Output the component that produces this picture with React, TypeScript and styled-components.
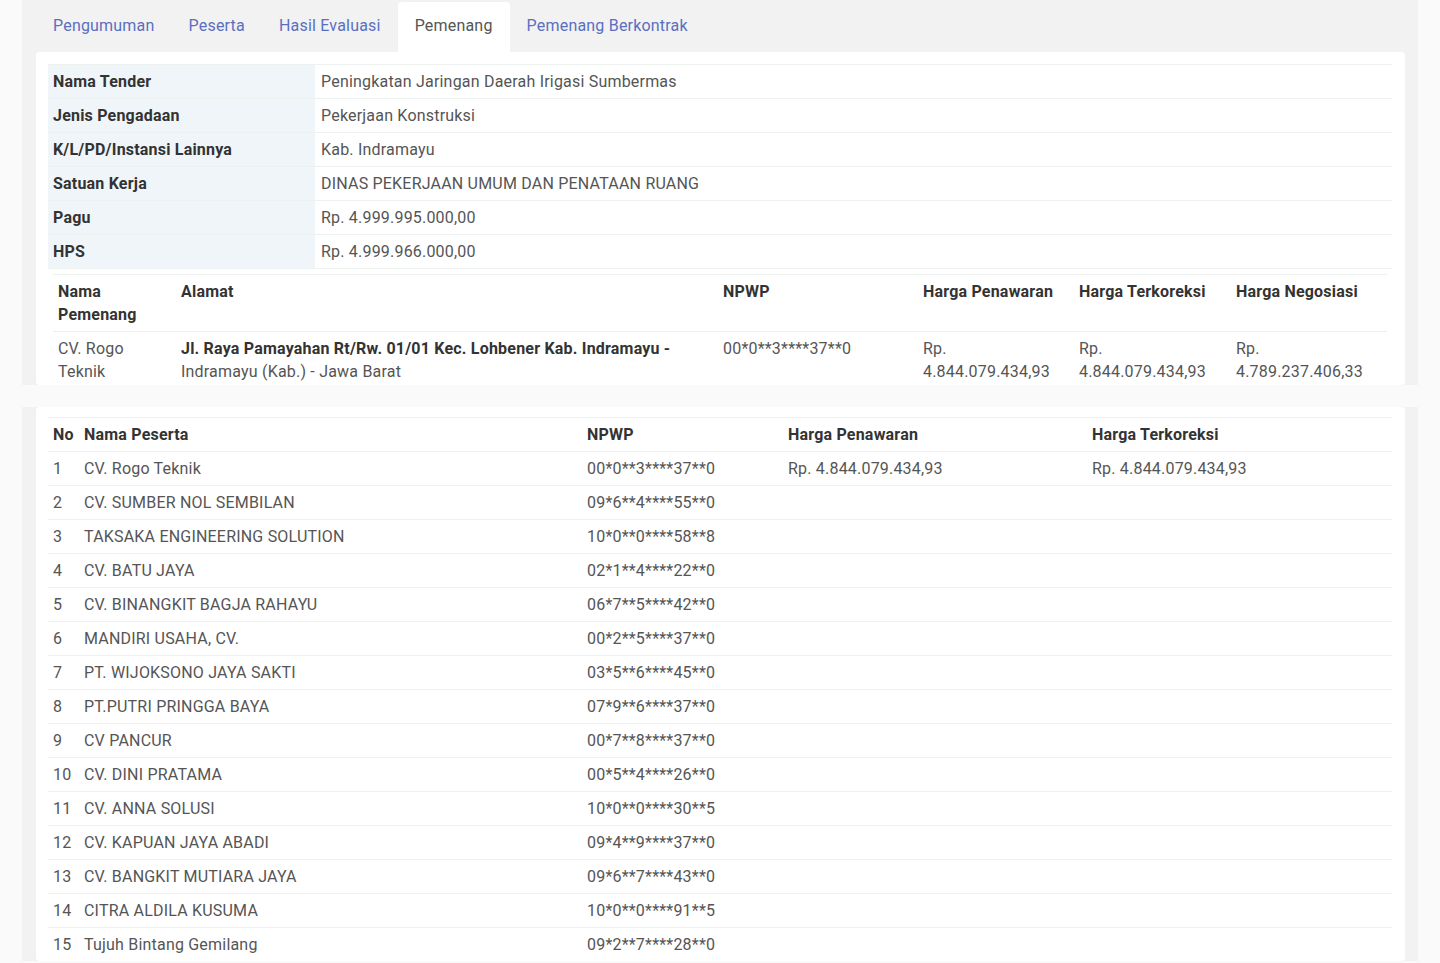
import React from "react";
import styled, { createGlobalStyle } from "styled-components";

const GlobalStyle = createGlobalStyle`
  html, body { margin: 0; padding: 0; }
  body {
    background: #fafafa;
    font-family: Roboto, "Liberation Sans", Arial, sans-serif;
    font-size: 16px;
    line-height: 23px;
    letter-spacing: 0.2px;
    color: #555;
  }
  * { box-sizing: border-box; }
`;

const Page = styled.div`
  padding: 0 22px;
  display: flex;
  flex-direction: column;
  gap: 22px;
`;

const Panel = styled.section`
  background: #f2f2f2;
  padding: 0 13px 0 14px;
`;

const Tabs = styled.ul`
  list-style: none;
  margin: 0;
  padding: 2px 0 0;
  display: flex;
`;

const Tab = styled.li<{ $active?: boolean }>`
  padding: 12px 17px 15px;
  border-radius: 4px 4px 0 0;
  background: ${(p) => (p.$active ? "#ffffff" : "transparent")};
  color: ${(p) => (p.$active ? "#555" : "#5a6fc0")};
  cursor: pointer;
  white-space: nowrap;
`;

const Card = styled.div<{ $top?: number; $bottom?: number }>`
  background: #fff;
  border-radius: 4px;
  padding: ${(p) => p.$top ?? 12}px 13px ${(p) => p.$bottom ?? 2}px 12px;
`;

const Table = styled.table`
  width: 100%;
  border-collapse: collapse;
  table-layout: fixed;
`;

const Row = styled.tr`
  border-top: 1px solid #edf1f0;
`;

const Label = styled.th`
  width: 267px;
  background: #f0f5f9;
  color: #333;
  font-weight: 700;
  text-align: left;
  padding: 5px;
`;

const Value = styled.td`
  padding: 5px 6px;
  color: #555;
`;

const Nested = styled.td`
  padding: 5px 5px 0;
`;

const Head = styled.th<{ $w?: number }>`
  ${(p) => (p.$w ? `width: ${p.$w}px;` : "")}
  text-align: left;
  vertical-align: top;
  font-weight: 700;
  color: #333;
  padding: 5px;
`;

const Cell = styled.td<{ $last?: boolean }>`
  vertical-align: top;
  color: #555;
  padding: ${(p) => (p.$last ? "5px 5px 0" : "5px")};
`;

const Addr = styled.strong`
  color: #333;
  font-weight: 700;
`;

const info: [string, string][] = [
  ["Nama Tender", "Peningkatan Jaringan Daerah Irigasi Sumbermas"],
  ["Jenis Pengadaan", "Pekerjaan Konstruksi"],
  ["K/L/PD/Instansi Lainnya", "Kab. Indramayu"],
  ["Satuan Kerja", "DINAS PEKERJAAN UMUM DAN PENATAAN RUANG"],
  ["Pagu", "Rp. 4.999.995.000,00"],
  ["HPS", "Rp. 4.999.966.000,00"],
];

const peserta: [string, string, string, string][] = [
  ["CV. Rogo Teknik", "00*0**3****37**0", "Rp. 4.844.079.434,93", "Rp. 4.844.079.434,93"],
  ["CV. SUMBER NOL SEMBILAN", "09*6**4****55**0", "", ""],
  ["TAKSAKA ENGINEERING SOLUTION", "10*0**0****58**8", "", ""],
  ["CV. BATU JAYA", "02*1**4****22**0", "", ""],
  ["CV. BINANGKIT BAGJA RAHAYU", "06*7**5****42**0", "", ""],
  ["MANDIRI USAHA, CV.", "00*2**5****37**0", "", ""],
  ["PT. WIJOKSONO JAYA SAKTI", "03*5**6****45**0", "", ""],
  ["PT.PUTRI PRINGGA BAYA", "07*9**6****37**0", "", ""],
  ["CV PANCUR", "00*7**8****37**0", "", ""],
  ["CV. DINI PRATAMA", "00*5**4****26**0", "", ""],
  ["CV. ANNA SOLUSI", "10*0**0****30**5", "", ""],
  ["CV. KAPUAN JAYA ABADI", "09*4**9****37**0", "", ""],
  ["CV. BANGKIT MUTIARA JAYA", "09*6**7****43**0", "", ""],
  ["CITRA ALDILA KUSUMA", "10*0**0****91**5", "", ""],
  ["Tujuh Bintang Gemilang", "09*2**7****28**0", "", ""],
];

const tabs = ["Pengumuman", "Peserta", "Hasil Evaluasi", "Pemenang", "Pemenang Berkontrak"];

export default function App() {
  return (
    <>
      <GlobalStyle />
      <Page>
        <Panel>
          <Tabs>
            {tabs.map((t) => (
              <Tab key={t} $active={t === "Pemenang"}>
                {t}
              </Tab>
            ))}
          </Tabs>
          <Card>
            <Table>
              <tbody>
                {info.map(([k, v]) => (
                  <Row key={k}>
                    <Label>{k}</Label>
                    <Value>{v}</Value>
                  </Row>
                ))}
                <Row>
                  <Nested colSpan={2}>
                    <Table>
                      <thead>
                        <Row>
                          <Head $w={123}>Nama Pemenang</Head>
                          <Head $w={542}>Alamat</Head>
                          <Head $w={200}>NPWP</Head>
                          <Head $w={156}>Harga Penawaran</Head>
                          <Head $w={157}>Harga Terkoreksi</Head>
                          <Head>Harga Negosiasi</Head>
                        </Row>
                      </thead>
                      <tbody>
                        <Row>
                          <Cell $last>CV. Rogo Teknik</Cell>
                          <Cell $last>
                            <Addr>Jl. Raya Pamayahan Rt/Rw. 01/01 Kec. Lohbener Kab. Indramayu -</Addr>
                            <br />
                            Indramayu (Kab.) - Jawa Barat
                          </Cell>
                          <Cell $last>00*0**3****37**0</Cell>
                          <Cell $last>Rp. 4.844.079.434,93</Cell>
                          <Cell $last>Rp. 4.844.079.434,93</Cell>
                          <Cell $last>Rp. 4.789.237.406,33</Cell>
                        </Row>
                      </tbody>
                    </Table>
                  </Nested>
                </Row>
              </tbody>
            </Table>
          </Card>
        </Panel>
        <Panel>
          <Card $top={10} $bottom={0}>
            <Table>
              <thead>
                <Row>
                  <Head $w={31}>No</Head>
                  <Head $w={503}>Nama Peserta</Head>
                  <Head $w={201}>NPWP</Head>
                  <Head $w={304}>Harga Penawaran</Head>
                  <Head>Harga Terkoreksi</Head>
                </Row>
              </thead>
              <tbody>
                {peserta.map(([name, npwp, p1, p2], i) => (
                  <Row key={name}>
                    <Cell>{i + 1}</Cell>
                    <Cell>{name}</Cell>
                    <Cell>{npwp}</Cell>
                    <Cell>{p1}</Cell>
                    <Cell>{p2}</Cell>
                  </Row>
                ))}
              </tbody>
            </Table>
          </Card>
        </Panel>
      </Page>
    </>
  );
}
